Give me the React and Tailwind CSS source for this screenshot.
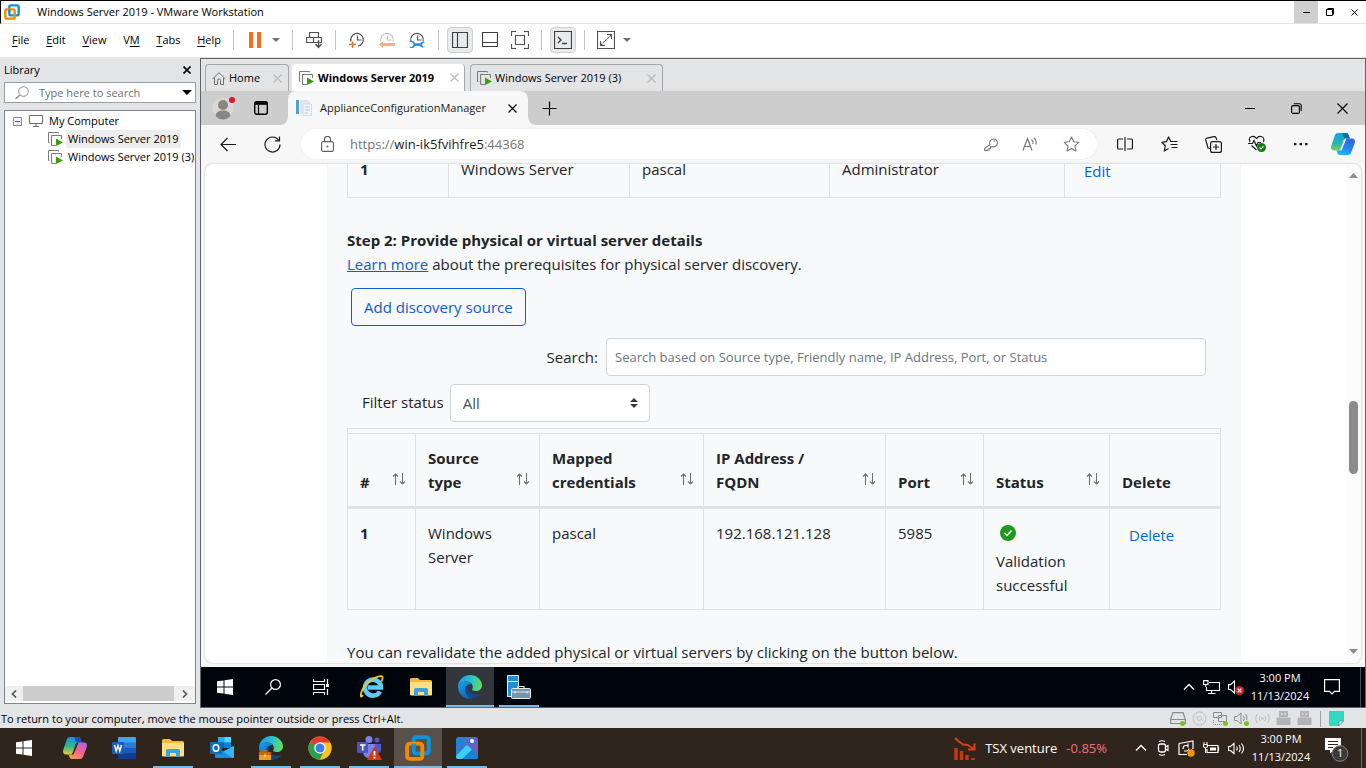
import React from "react";

function Icon({ w = 16, h = w, className = "", children, ...rest }) {
  return (
    <svg width={w} height={h} viewBox={`0 0 ${w} ${h}`} fill="none" aria-hidden="true" className={`shrink-0 ${className}`} {...rest}>
      {children}
    </svg>
  );
}

/* ---------- shared icons ---------- */

const VmwareLogo = ({ size = 16 }) => (
  <svg width={size} height={size} viewBox="0 0 24 24" fill="none" aria-hidden="true" className="shrink-0">
    <rect x="8" y="2" width="14" height="15" rx="2.5" stroke="#0f95d4" strokeWidth="3.6" />
    <rect x="2" y="8" width="14" height="14" rx="2.5" stroke="#f38b00" strokeWidth="3.6" />
    <path d="M8 12V8" stroke="#0f95d4" strokeWidth="3.6" />
  </svg>
);

const VmIcon = () => (
  <Icon w={15} h={14}>
    <path d="M1.5 10.5h-1V.5h10v1" stroke="#7a7a7a" />
    <path d="M8 13.5H3.500V3.500H13.500V7" stroke="#7a7a7a" />
    <path d="M8 6.500L15 10.500L8 14Z" fill="#3f9c0c" />
  </Icon>
);

const WinLogo = () => (
  <Icon w={16}>
    <path d="M0 2.300L6.500 1.400V7.500H0ZM7.500 1.200L16 0V7.500H7.500ZM0 8.500H6.500V14.600L0 13.700ZM7.500 8.500H16V16L7.500 14.800Z" fill="#fff" />
  </Icon>
);

const CloseX = ({ size = 9, color = "#000", width = 1.4 }) => (
  <Icon w={size}>
    <path d={`M.5 .5L${size - 0.5} ${size - 0.5}M${size - 0.5} .5L.5 ${size - 0.5}`} stroke={color} strokeWidth={width} />
  </Icon>
);

const Caret = ({ color = "#707070", w = 8 }) => (
  <Icon w={w} h={w / 2}>
    <path d={`M0 0H${w}L${w / 2} ${w / 2}Z`} fill={color} />
  </Icon>
);

const EdgeLogo = ({ badge }) => (
  <Icon w={24}>
    <defs>
      <linearGradient id="edgeTop" x1="2" y1="6" x2="24" y2="10" gradientUnits="userSpaceOnUse">
        <stop stopColor="#1e9fe0" /><stop offset=".5" stopColor="#2cc3c9" /><stop offset="1" stopColor="#6be04a" />
      </linearGradient>
      <linearGradient id="edgeLow" x1="0" y1="8" x2="12" y2="24" gradientUnits="userSpaceOnUse">
        <stop stopColor="#1d9be8" /><stop offset="1" stopColor="#0b5cb5" />
      </linearGradient>
    </defs>
    <path d="M0 12C0 5 5.500 0 12 0S24 5 24 10.500C24 14 21 16 18 16C15 16 13.800 15.200 14.200 14.500C15.500 12.500 15 7 9.500 6.500C4 6 .6 9 0 12Z" fill="url(#edgeTop)" />
    <path d="M0 12C.6 8.500 4.500 6.300 8.500 6.500C11 6.600 13 7.600 14 9C10 8.500 7 12 7.500 16C8 20.500 12 23.500 15.500 23.400C7 25.500 0 19.500 0 12Z" fill="url(#edgeLow)" />
    <path d="M10 9.500C6 11.500 6.500 19.500 12.500 22.500C17 24.500 21 21.500 22.700 18.700C19 20.500 14 20 11.500 17C9.500 14.500 9.500 12 10 9.500Z" fill="#114a8b" />
    {badge && (
      <>
        <rect x="0" y="16" width="12" height="8" fill="#f59a1b" />
        <rect x="0" y="16" width="12" height="3" fill="#c56a08" />
        <path d="M4 16V14.500H8V16" stroke="#c56a08" />
        <rect x="5" y="18.500" width="2" height="2" fill="#fff2b0" />
      </>
    )}
  </Icon>
);

const CopilotLogo = ({ warm }) => (
  <Icon w={24} h={22}>
    <defs>
      <linearGradient id="copA" x1="4" y1="0" x2="4" y2="18" gradientUnits="userSpaceOnUse">
        <stop stopColor="#14a5e4" /><stop offset=".6" stopColor="#25b6ad" /><stop offset="1" stopColor="#8ed24b" />
      </linearGradient>
      <linearGradient id="copB" x1="20" y1="4" x2="14" y2="22" gradientUnits="userSpaceOnUse">
        <stop stopColor="#3b5bdb" /><stop offset=".6" stopColor="#2482ee" /><stop offset="1" stopColor="#18b7fb" />
      </linearGradient>
      <linearGradient id="copC" x1="20" y1="5" x2="10" y2="22" gradientUnits="userSpaceOnUse">
        <stop stopColor="#b164e8" /><stop offset=".5" stopColor="#f2618e" /><stop offset="1" stopColor="#fb9c55" />
      </linearGradient>
      <linearGradient id="copD" x1="4" y1="0" x2="3" y2="18" gradientUnits="userSpaceOnUse">
        <stop stopColor="#1b8fe8" /><stop offset=".5" stopColor="#2fb58a" /><stop offset="1" stopColor="#f0cf2a" />
      </linearGradient>
    </defs>
    <path d="M7 0H15C17 0 17.500 1.500 18 3L18.800 5.500H15C13.500 5.500 12.800 6.500 12.400 7.800L9.800 15.500C9.200 17 8.300 17.500 7 17.500H3C0 17.500-.4 15 .4 12.500L3.600 3C4.300 1 5.300 0 7 0Z" fill={warm ? "url(#copD)" : "url(#copA)"} />
    <path d="M11 0H15C17 0 17.500 1.500 18 3L18.800 5.500H14C12 4.500 12.500 2 11 0Z" fill={warm ? "#1c4fc4" : "#0b6fa0"} />
    <path d="M17 22H9C7 22 6.500 20.500 6 19L5.400 17.500H7.500C9 17.500 9.700 16.500 10.100 15L13.200 7.500C13.700 6 14.500 5.500 16 5.500H21C24 5.500 24.400 8 23.600 10.500L20.400 19C19.700 21 18.700 22 17 22Z" fill={warm ? "url(#copC)" : "url(#copB)"} />
    <path d="M13.200 7.500C13.700 6 14.500 5.500 15.500 5.500L10.500 17.500H8C9 17.300 9.700 16.500 10.100 15Z" fill={warm ? "#30251d" : "#fff"} />
  </Icon>
);

const FolderIcon = () => (
  <Icon w={22} h={18}>
    <path d="M0 1.500Q0 0 1.500 0H8L10 2H20.500Q22 2 22 3.500V17H0Z" fill="#f5b83d" />
    <path d="M0 4H22V16.500Q22 17.500 21 17.500H1Q0 17.500 0 16.500Z" fill="#ffdf83" />
    <path d="M4 18V11.500Q4 10 5.500 10H16.500Q18 10 18 11.500V18H14V14H8V18Z" fill="#3ba3e0" />
  </Icon>
);

const ChevronUp = () => (
  <Icon w={12} h={8}>
    <path d="M1 6.500L6 1.500L11 6.500" stroke="#fff" strokeWidth="1.3" />
  </Icon>
);

/* ---------- window title and menu bar ---------- */

function TitleBar() {
  return (
    <header className="flex h-[23px] shrink-0 items-center border-b border-l border-b-[#e2e2e2] border-l-black bg-white pl-[3px]">
      <VmwareLogo />
      <h1 className="ml-[17px] flex-1 text-[11px] leading-4 text-black">Windows Server 2019 - VMware Workstation</h1>
      <button aria-label="Minimize" className="flex h-full w-6 items-center justify-center bg-[#cfcfcf]">
        <span className="h-px w-[7px] bg-black" />
      </button>
      <button aria-label="Restore" className="flex h-full w-6 items-center justify-center">
        <Icon w={8}>
          <path d="M.5 1.500H6.500V7.500H.5ZM1.500 .5H7.500V6.500" stroke="#000" />
        </Icon>
      </button>
      <button aria-label="Close" className="flex h-full w-6 items-center justify-center">
        <CloseX size={7} width={1} />
      </button>
    </header>
  );
}

const menus = [["", "F", "ile"], ["", "E", "dit"], ["", "V", "iew"], ["V", "M", ""], ["", "T", "abs"], ["", "H", "elp"]];

const Sep = () => <span className="h-5 w-px shrink-0 bg-[#c4c4c4]" />;

const Clock = ({ color = "#505050", children }) => (
  <Icon w={16}>
    <path d="M2 9.500A6.300 6.300 0 1 1 9 14" stroke={color} strokeWidth="1.200" />
    <path d="M8.500 3.500V8H12.500" stroke={color} strokeWidth="1.200" />
    {children}
  </Icon>
);

/* The lower part of the dial stays open so the tool drawn there is readable. */
const HalfClock = ({ color = "#505050", children }) => (
  <Icon w={16}>
    <path d="M2 9.500A6.300 6.300 0 1 1 14 9.500" stroke={color} strokeWidth="1.200" />
    <path d="M8.500 3.500V8H12.500" stroke={color} strokeWidth="1.200" />
    {children}
  </Icon>
);

function MenuBar() {
  const tool = "flex h-[26px] w-[26px] shrink-0 items-center justify-center";
  const pressed = "flex h-[26px] w-[26px] shrink-0 items-center justify-center rounded-[4px] border border-[#cfcfcf] bg-[#e9eaec]";
  return (
    <div className="flex h-[33px] shrink-0 items-center bg-white pb-[2px] pl-3">
      <nav className="flex w-[221px] shrink-0 justify-between pr-3 text-[11px] leading-4 text-black">
        {menus.map(([a, b, c]) => (
          <button key={a + b + c}>
            {a}<span className="underline underline-offset-2">{b}</span>{c}
          </button>
        ))}
      </nav>
      <Sep />
      <div className="flex w-[58px] shrink-0 items-center justify-center gap-[11px] pl-[3px]">
        <button aria-label="Suspend">
          <Icon w={12} h={16}><path d="M0 0H4V16H0ZM8 0H12V16H8Z" fill="#ff6a1a" /></Icon>
        </button>
        <button aria-label="Power options"><Caret /></button>
      </div>
      <Sep />
      <button aria-label="Send Ctrl+Alt+Del" className="flex w-[42px] shrink-0 justify-center">
        <Icon w={17} h={18}>
          <path d="M3.500 1.500H12.500V6.500H3.500ZM.5 6.500H7.500V11.500H.5ZM7.500 6.500H15.500V11.500H7.500Z" stroke="#505050" strokeWidth="1.200" />
          <path d="M12.500 9V16M9.500 13L12.500 16.500L15.500 13" stroke="#505050" strokeWidth="1.400" />
        </Icon>
      </button>
      <Sep />
      <div className="flex w-[102px] shrink-0 items-center justify-center gap-[14px]">
        <button aria-label="Take snapshot">
          <Clock><path d="M3.500 9.500V16M0 12.500H7" stroke="#f06a2a" strokeWidth="1.500" /></Clock>
        </button>
        <button aria-label="Revert snapshot">
          <HalfClock color="#c4c4c4"><path d="M0 12.500L4 9V11H16V14H4V16Z" fill="#ffab86" /></HalfClock>
        </button>
        <button aria-label="Manage snapshots">
          <HalfClock><path d="M0 10H3L4.500 12.500L3 15H0A3.500 3.500 0 0 0 6 14H11A3 3 0 0 0 16 14.500H14L13 12.500L14 11H16A3 3 0 0 0 11 11.300H6A3.500 3.500 0 0 0 0 10Z" fill="#2b95dc" /></HalfClock>
        </button>
      </div>
      <Sep />
      <div className="flex w-[102px] shrink-0 items-center justify-center gap-1">
        <button aria-label="Show library" className={pressed}>
          <Icon w={16}><path d="M.5 .5H15.500V15.500H.5ZM5.500 .5V15.500" stroke="#404040" strokeWidth="1.200" /></Icon>
        </button>
        <button aria-label="Show thumbnail bar" className={tool}>
          <Icon w={16}><path d="M.5 .5H15.500V14.500H.5ZM.5 10.500H15.500" stroke="#404040" strokeWidth="1.200" /></Icon>
        </button>
        <button aria-label="Stretch guest" className={tool}>
          <Icon w={18}><path d="M.5 5V.5H5M13 .5H17.500V5M17.500 13V17.500H13M5 17.500H.5V13M4.500 4.500H13.500V13.500H4.500Z" stroke="#505050" strokeWidth="1.200" /></Icon>
        </button>
      </div>
      <Sep />
      <div className="flex w-[42px] shrink-0 justify-center">
        <button aria-label="Console view" className={pressed}>
          <Icon w={18}><path d="M.5 .5H17.500V17.500H.5Z" stroke="#404040" strokeWidth="1.200" /><path d="M4 6L7 9L4 12M8 12.500H13" stroke="#404040" strokeWidth="1.400" /></Icon>
        </button>
      </div>
      <Sep />
      <div className="ml-3 flex shrink-0 items-center gap-2">
        <button aria-label="Full screen">
          <Icon w={18}><path d="M.5 .5H17.500V17.500H.5Z" stroke="#505050" strokeWidth="1.200" /><path d="M3.500 10V14.500H8M10 3.500H14.500V8" stroke="#505050" strokeWidth="1.100" /><path d="M4 14L14 4" stroke="#505050" strokeWidth="1.100" strokeDasharray="2 1" /></Icon>
        </button>
        <button aria-label="Full screen options"><Caret /></button>
      </div>
    </div>
  );
}

/* ---------- library sidebar ---------- */

function Library() {
  return (
    <aside className="flex w-[200px] shrink-0 flex-col pb-[4px] pl-1 pr-1 pt-[4px]">
      <div className="flex h-[18px] items-center justify-between pr-[5px]">
        <h2 className="text-[11px] leading-4 text-black">Library</h2>
        <button aria-label="Close library"><CloseX size={8} width={1.6} /></button>
      </div>
      <div className="mt-[3px] flex h-[21px] items-center border border-[#9a9ea3] bg-white pl-[10px] pr-[3px]">
        <Icon w={14}><circle cx="8.500" cy="5.500" r="4.800" stroke="#8a8a8a" /><path d="M5 9L.5 13" stroke="#8a8a8a" strokeWidth="1.300" /></Icon>
        <input aria-label="Search library" placeholder="Type here to search" className="ml-[10px] w-full min-w-0 flex-1 bg-transparent text-[11px] leading-4 outline-none placeholder:text-[#707070]" />
        <button aria-label="Search options"><Caret color="#000" w={10} /></button>
      </div>
      <div className="mt-[7px] flex min-h-0 flex-1 flex-col border border-[#82878f] bg-white">
        <ul className="min-h-0 flex-1 overflow-hidden whitespace-nowrap pt-px text-[11px] leading-[18px] text-black">
          <li className="flex h-[18px] items-center pl-2">
            <Icon w={9}><path d="M.5 .5H8.500V8.500H.5Z" fill="#f4f4f4" stroke="#8c8c8c" /><path d="M2 4.500H7" stroke="#3c5a9a" /></Icon>
            <Icon w={15} h={12} className="ml-[7px]"><path d="M.5 .5H13.500V8.500H.5ZM7 8.500V11M4 11.500H10" stroke="#6e6e6e" /></Icon>
            <span className="ml-[5px]">My Computer</span>
          </li>
          <li className="flex h-[18px] items-center gap-[3px] pl-[43px]"><VmIcon /><span className="bg-[#ededed] px-[2px]">Windows Server 2019</span></li>
          <li className="flex h-[18px] items-center gap-[3px] pl-[43px]"><VmIcon /><span className="px-[2px]">Windows Server 2019 (3)</span></li>
        </ul>
        <div className="mb-[2px] flex h-[15px] items-stretch bg-[#f0f0f0]">
          <button aria-label="Scroll left" className="flex w-[18px] items-center justify-center"><Icon w={6} h={8}><path d="M5 .5L1.500 4L5 7.500" stroke="#505050" strokeWidth="1.600" /></Icon></button>
          <div className="flex-1 bg-[#cdcdcd]" />
          <button aria-label="Scroll right" className="flex w-[21px] items-center justify-center"><Icon w={6} h={8}><path d="M1 .5L4.500 4L1 7.500" stroke="#505050" strokeWidth="1.600" /></Icon></button>
        </div>
      </div>
    </aside>
  );
}

/* ---------- guest tabs ---------- */

function GuestTabs() {
  const idle = "flex shrink-0 items-center rounded-t-[4px] border border-b-0 border-[#a3a7ab] bg-[#e3e4e6]";
  return (
    <div className="flex h-[32px] shrink-0 bg-[#e3e4e6] pl-1 pt-[5px] text-[11px] leading-4 text-black">
      <div className={`${idle} w-[84px] px-[6px]`}>
        <Icon w={14} h={13}><path d="M.5 7L7 .7L13.500 7M2.500 5.500V12.500H5.500V8.500Q5.500 7 7 7T8.500 8.500V12.500H11.500V5.500" stroke="#707070" /></Icon>
        <button className="ml-[3px] flex-1 text-left">Home</button>
        <button aria-label="Close Home"><CloseX color="#bdbdbd" /></button>
      </div>
      <div className="ml-[3px] flex w-[173px] shrink-0 items-center rounded-t-[4px] border-r border-[#a3a7ab] bg-white pl-[7px] pr-[5px]">
        <VmIcon />
        <button className="ml-1 flex-1 whitespace-nowrap text-left font-bold">Windows Server 2019</button>
        <button aria-label="Close Windows Server 2019"><CloseX color="#bdbdbd" /></button>
      </div>
      <div className={`${idle} ml-[5px] w-[193px] px-[6px]`}>
        <VmIcon />
        <button className="ml-[3px] flex-1 whitespace-nowrap text-left">Windows Server 2019 (3)</button>
        <button aria-label="Close Windows Server 2019 (3)"><CloseX color="#bdbdbd" /></button>
      </div>
    </div>
  );
}

/* ---------- browser chrome ---------- */

function BrowserTabs() {
  return (
    <div className="flex h-[34px] shrink-0 bg-[#f7f7f7]">
      <div className="flex w-[87px] shrink-0 items-center gap-[18px] rounded-br-lg bg-[#cdcdcd] pl-[11px]">
        <button aria-label="Profile">
          <Icon w={24}>
            <circle cx="11" cy="12" r="10.500" fill="#dad7d4" />
            <circle cx="11" cy="9" r="5" fill="#8a8583" />
            <path d="M3.500 20Q4 14.500 11 14.500T18.500 20Q15 23.500 11 23.500T3.500 20Z" fill="#8a8583" />
            <circle cx="20" cy="4" r="3" fill="#e81123" />
          </Icon>
        </button>
        <button aria-label="Tab actions">
          <Icon w={14}><rect x=".7" y=".7" width="12.600" height="12.600" rx="2" stroke="#000" strokeWidth="1.400" /><path d="M.7 2.500H13.300" stroke="#000" strokeWidth="2.600" /><path d="M4.500 4V13" stroke="#000" strokeWidth="1.200" /></Icon>
        </button>
      </div>
      <div className="w-[240px] shrink-0 bg-[#cdcdcd]">
        <div className="flex h-full items-center rounded-t-lg bg-[#f7f7f7] pl-2 pr-[11px]">
          <Icon w={16}>
            <path d="M0 0H3V14H0Z" fill="#4f9fd0" />
            <path d="M5 0H11L13 2V13H5Z" fill="#dfe8f2" stroke="#c2d1e2" strokeWidth=".6" />
            <path d="M7 4H15.500V15.500H7Z" fill="#f2f6fa" stroke="#c2d1e2" strokeWidth=".7" />
            <path d="M9 7H14M9 10H14M9 13H12" stroke="#b4c6db" />
          </Icon>
          <button className="ml-2 flex-1 whitespace-nowrap text-left text-[11px] leading-4 text-[#1b1b1b]">ApplianceConfigurationManager</button>
          <button aria-label="Close tab"><CloseX size={9} width={1.200} /></button>
        </div>
      </div>
      <div className="flex flex-1 items-center rounded-bl-lg bg-[#cdcdcd] pl-[14px]">
        <button aria-label="New tab"><Icon w={15}><path d="M7.500 .5V14.500M.5 7.500H14.500" stroke="#000" strokeWidth="1.200" /></Icon></button>
        <div className="ml-auto flex h-full">
          <button aria-label="Minimize browser" className="flex w-[46px] items-center justify-center"><span className="h-px w-[10px] bg-black" /></button>
          <button aria-label="Restore browser" className="flex w-[46px] items-center justify-center">
            <Icon w={11}><rect x=".6" y="2.600" width="7.800" height="7.800" rx="1.500" stroke="#000" strokeWidth="1.100" /><path d="M2.800 .8H8.200Q10.200 .8 10.200 2.800V8" stroke="#000" strokeWidth="1.100" /></Icon>
          </button>
          <button aria-label="Close browser" className="flex w-[46px] items-center justify-center"><CloseX size={11} width={1.200} /></button>
        </div>
      </div>
    </div>
  );
}

function BrowserToolbar() {
  const slot = "flex w-11 shrink-0 items-center justify-center";
  return (
    <div className="flex h-[38px] shrink-0 items-center bg-[#f7f7f7] pl-[5px] pr-[2px]">
      <button aria-label="Back" className={slot}><Icon w={16} h={15}><path d="M16 7.500H1M7.500 1L1 7.500L7.500 14" stroke="#1b1b1b" strokeWidth="1.200" /></Icon></button>
      <button aria-label="Refresh" className={slot}><Icon w={17}><path d="M14.500 4A7.500 7.500 0 1 0 16 8.500M15.500 .5V4.800H11" stroke="#1b1b1b" strokeWidth="1.200" /></Icon></button>
      <div className="ml-[7px] flex h-[30px] flex-1 items-center rounded-full bg-white pl-[20px] pr-[17px] shadow-[0_0_2px_rgba(0,0,0,0.08)]">
        <Icon w={13} h={16}><rect x=".6" y="5.600" width="11.800" height="9.800" rx="1.500" stroke="#5c5c5c" strokeWidth="1.100" /><path d="M3.500 5.500V3.500A3 3 0 0 1 9.500 3.500V5.500" stroke="#5c5c5c" strokeWidth="1.100" /><circle cx="6.500" cy="10.500" r="1" fill="#5c5c5c" /></Icon>
        <div role="textbox" aria-label="Address" contentEditable suppressContentEditableWarning className="ml-[16px] flex-1 whitespace-nowrap text-[13px] leading-5 text-[#767676] outline-none">
          https://<span className="text-[#1b1b1b]">win-ik5fvihfre5</span>:44368
        </div>
        <div className="flex items-center gap-6">
          <button aria-label="Saved password"><Icon w={14}><path d="M6 7.500A3.900 3.900 0 1 1 8 9.500L6.500 10V11.500H5V13H3.500V13.500H.6V11.500L6 7.500Z" stroke="#767676" strokeWidth="1.100" /><circle cx="10.500" cy="4" r=".8" fill="#767676" /></Icon></button>
          <button aria-label="Read aloud"><Icon w={17} h={14}><path d="M1 13.500L5.500 1.500L10 13.500M2.500 9.500H8.500" stroke="#767676" strokeWidth="1.200" /><path d="M9.500 2.500Q11.500 4 11 7M12 .8Q15 3.500 13.800 7.500" stroke="#767676" strokeWidth="1.100" /></Icon></button>
          <button aria-label="Add to favorites"><Icon w={17} h={16}><path d="M8.500 1L10.700 5.700L15.800 6.300L12 9.800L13 15L8.500 12.500L4 15L5 9.800L1.200 6.300L6.300 5.700Z" stroke="#767676" strokeWidth="1.100" strokeLinejoin="round" /></Icon></button>
        </div>
      </div>
      <div className="ml-1.5 flex items-center">
        <button aria-label="Split screen" className={slot}><Icon w={16} h={14}><path d="M6 2H1.500Q.6 2 .6 3V11Q.6 12 1.500 12H6M10 2H14.500Q15.400 2 15.400 3V11Q15.400 12 14.500 12H10M8 0V14" stroke="#1b1b1b" strokeWidth="1.200" /></Icon></button>
        <button aria-label="Favorites" className={slot}><Icon w={17} h={16}><path d="M11 5.500L9.800 5.500L7.500 1L5.500 5.700L.8 6.300L4.300 9.700L3.300 15L7.500 12.500M10.500 5.500H16.500M9.500 8.500H16.500M10.500 11.500H16.500" stroke="#1b1b1b" strokeWidth="1.200" strokeLinejoin="round" /></Icon></button>
        <button aria-label="Collections" className={slot}><Icon w={17}><path d="M5 12.500L3 12L.8 4Q.5 2.700 1.800 2.200L9 .7Q10.500 .4 11 1.700L11.700 4" stroke="#1b1b1b" strokeWidth="1.200" /><rect x="5.600" y="5.600" width="10.800" height="10.800" rx="2" stroke="#1b1b1b" strokeWidth="1.200" /><path d="M11 8V14M8 11H14" stroke="#1b1b1b" strokeWidth="1.200" /></Icon></button>
        <button aria-label="Browser essentials" className={slot}><Icon w={18}><path d="M2 7Q0 2.500 4 1.500Q6.500 1 8.500 3.500Q10.500 1 13 1.500Q17 2.500 15.500 7M3.500 10.500L8.500 15M0 8.500H4.500L6 5.500L8.500 11L10 7.500H13" stroke="#1b1b1b" strokeWidth="1.200" /><circle cx="13.500" cy="12.500" r="4.500" fill="#107c10" /><path d="M11.500 12.500L13 14L15.500 11" stroke="#fff" strokeWidth="1.100" /></Icon></button>
        <button aria-label="Settings and more" className={slot}><Icon w={14} h={4}><path d="M0 1H2.500V3.200H0ZM5.500 1H8V3.200H5.500ZM11 1H13.500V3.200H11Z" fill="#1b1b1b" /></Icon></button>
        <button aria-label="Copilot" className="flex w-10 shrink-0 items-center justify-center"><CopilotLogo /></button>
      </div>
    </div>
  );
}

/* ---------- page content ---------- */

const SortArrows = () => (
  <Icon w={14} h={12} className="mb-[9px]">
    <path d="M3.500 12V1M1 3.500L3.500 1L6 3.500M10.500 0V11M8 8.500L10.500 11L13 8.500" stroke="#6c7075" strokeWidth="1.100" />
  </Icon>
);

const columns = [
  { name: "#", width: 68, sort: true },
  { name: "Source type", width: 124, sort: true },
  { name: "Mapped credentials", width: 164, sort: true },
  { name: "IP Address / FQDN", width: 182, sort: true },
  { name: "Port", width: 98, sort: true },
  { name: "Status", width: 126, sort: true },
  { name: "Delete", width: 111, sort: false },
];

const cell = "border border-[#dee2e6] p-3 align-top font-normal";
const tallCell = "border border-[#dee2e6] px-3 pb-4 pt-3 align-top font-normal";

function CredentialsTable() {
  return (
    <table className="w-full table-fixed border-collapse text-left">
      <colgroup>
        {[101, 181, 200, 235, 156].map((w) => <col key={w} style={{ width: w }} />)}
      </colgroup>
      <tbody>
        <tr>
          <td className={tallCell}><b>1</b></td>
          <td className={tallCell}>Windows Server</td>
          <td className={tallCell}>pascal</td>
          <td className={tallCell}>Administrator</td>
          <td className={tallCell}><button className="ml-[7px] mt-[2px] block h-[22px] text-[#0366d6]">Edit</button></td>
        </tr>
      </tbody>
    </table>
  );
}

function ServersTable() {
  return (
    <div className="mt-[6px] border-t border-[#dee2e6]">
      <div className="h-[4px] border-x border-[#dee2e6]" />
      <table className="w-full table-fixed border-collapse text-left">
        <colgroup>
          {columns.map((c) => <col key={c.name} style={{ width: c.width }} />)}
        </colgroup>
        <thead>
          <tr>
            {columns.map((c) => (
              <th key={c.name} className="border border-b-[3px] border-[#dee2e6] py-3 pl-3 pr-[9px] align-bottom font-bold">
                <div className="flex items-end justify-between gap-[14px]">
                  <span>{c.name}</span>
                  {c.sort && <SortArrows />}
                </div>
              </th>
            ))}
          </tr>
        </thead>
        <tbody>
          <tr>
            <td className={cell}><b>1</b></td>
            <td className={cell}>Windows Server</td>
            <td className={cell}>pascal</td>
            <td className={cell}>192.168.121.128</td>
            <td className={cell}>5985</td>
            <td className={cell}>
              <Icon w={16} className="mb-2 ml-1 mt-[4px] block"><circle cx="8" cy="8" r="8" fill="#1f9a1f" /><path d="M4.500 8L7 10.500L11.500 5.500" stroke="#fff" strokeWidth="1.500" /></Icon>
              Validation successful
            </td>
            <td className={cell}><button className="ml-[7px] mt-[2px] block text-[#0366d6]">Delete</button></td>
          </tr>
        </tbody>
      </table>
    </div>
  );
}

function PageContent() {
  return (
    <div className="flex min-h-0 flex-1 bg-[#f7f7f7] px-1 pb-1 pt-px">
      <div className="flex min-w-0 flex-1 overflow-hidden rounded-lg bg-white shadow-[0_0_2px_rgba(0,0,0,0.3)]">
        <main className="ml-[122px] mr-[105px] min-w-0 flex-1 overflow-hidden bg-[#f8f9fb] px-5 text-[15px] leading-6 text-[#212529]">
          <div className="-mt-5">
            <CredentialsTable />
            <h3 className="mt-[30px] font-bold">Step 2: Provide physical or virtual server details</h3>
            <p><a href="#prerequisites" className="text-[#0b5cd5] underline">Learn more</a> about the prerequisites for physical server discovery.</p>
            <button className="ml-1 mt-3 block h-[38px] rounded-[4px] border border-[#0b5cd5] px-3 text-[#0b5cd5]">Add discovery source</button>
            <div className="mt-3 flex items-center justify-end pr-[15px]">
              <label htmlFor="server-search">Search:</label>
              <input id="server-search" placeholder="Search based on Source type, Friendly name, IP Address, Port, or Status" className="ml-2 h-[38px] w-[600px] rounded-[4px] border border-[#ced4da] bg-white px-2 text-[13px] leading-5 outline-none placeholder:text-[#6c757d]" />
            </div>
            <div className="mt-2 flex items-center pl-[15px]">
              <label htmlFor="status-filter" className="pb-[3px]">Filter status</label>
              <div className="relative ml-1.5 w-[200px]">
                <select id="status-filter" className="h-[38px] w-full appearance-none rounded-[4px] border border-[#ced4da] bg-white px-3 text-[#495057] outline-none">
                  <option>All</option>
                </select>
                <Icon w={8} h={10} className="pointer-events-none absolute right-3 top-[14px]"><path d="M0 4L4 0L8 4ZM0 6H8L4 10Z" fill="#343a40" /></Icon>
              </div>
            </div>
            <ServersTable />
            <p className="mt-[30px]">You can revalidate the added physical or virtual servers by clicking on the button below.</p>
          </div>
        </main>
        <div className="flex w-[15px] shrink-0 flex-col items-center bg-[#fbfbfb] py-[9px]">
          <button aria-label="Scroll up"><Icon w={9} h={5}><path d="M0 5L4.500 0L9 5Z" fill="#8b8b8b" /></Icon></button>
          <div className="flex-[222]" />
          <div className="h-[73px] w-[9px] rounded-full bg-[#8b8b8b]" />
          <div className="flex-[175]" />
          <button aria-label="Scroll down"><Icon w={9} h={5}><path d="M0 0L4.500 5L9 0Z" fill="#8b8b8b" /></Icon></button>
        </div>
      </div>
    </div>
  );
}

/* ---------- taskbars ---------- */

function Task({ label, active, open, children }) {
  return (
    <button aria-label={label} className={`relative flex h-10 w-12 shrink-0 items-center justify-center ${active ? "bg-white/20" : ""}`}>
      {children}
      {(active || open) && <span className={`absolute bottom-0 h-[2px] bg-[#76b9ed] ${active ? "inset-x-0" : "inset-x-1"}`} />}
    </button>
  );
}

function ClockText() {
  return (
    <div className="w-16 shrink-0 text-center text-[11px] leading-[18px] text-white">
      <div>3:00 PM</div>
      <div>11/13/2024</div>
    </div>
  );
}

function GuestTaskbar() {
  return (
    <footer className="flex h-10 shrink-0 items-center bg-[#00050b]">
      <Task label="Start"><WinLogo /></Task>
      <Task label="Search"><Icon w={16}><circle cx="10.500" cy="5.500" r="4.900" stroke="#fff" strokeWidth="1.200" /><path d="M7 9L.5 15.500" stroke="#fff" strokeWidth="1.300" /></Icon></Task>
      <Task label="Task view"><Icon w={17} h={16}><path d="M.5 0V2.500H11.500V0M.5 16V13.500H11.500V16M.5 5.500H11.500V10.500H.5ZM14.500 0V5M14.500 10V16" stroke="#fff" strokeWidth="1.200" /><rect x="13" y="5" width="3" height="3" fill="#fff" /></Icon></Task>
      <div className="ml-[3px] flex gap-px">
        <Task label="Internet Explorer">
          <Icon w={24}>
            <path d="M20 16.500A8 8 0 1 1 21 12.500H8" stroke="#5ccbf5" strokeWidth="4.600" />
            <path d="M3 20Q0 24 1 18.500Q3 10 12 4.500Q21-.5 22.500 2Q23 3.500 21.500 6.500" stroke="#f2c32e" strokeWidth="1.800" />
          </Icon>
        </Task>
        <Task label="File Explorer"><FolderIcon /></Task>
        <Task label="Microsoft Edge" active><EdgeLogo /></Task>
        <Task label="Server Manager" open>
          <Icon w={24}>
            <path d="M.5 .5H11.500V21.500H.5Z" fill="#1e8fdc" stroke="#d8ecfa" />
            <path d="M1 6.500H11" stroke="#d8ecfa" />
            <path d="M11 13V11.500H17V13" stroke="#e4e9ed" strokeWidth="1.200" />
            <rect x="4.500" y="13.500" width="19" height="10" rx="1" fill="#7695a8" stroke="#e4e9ed" />
            <path d="M5 17H23M8 16V18.500M20 16V18.500" stroke="#e4e9ed" />
          </Icon>
        </Task>
      </div>
      <div className="ml-auto flex items-center">
        <div className="flex items-center gap-[8px]">
          <button aria-label="Hidden icons"><ChevronUp /></button>
          <Icon w={17} h={14}><path d="M6 2.500H16.500V10.500H3.500V7M8.500 11V13.500M5 13.500H12.500" stroke="#fff" strokeWidth="1.100" /><path d="M.6 .6H5V4.500H.6ZM2.800 4.500V7" stroke="#fff" strokeWidth="1.100" /></Icon>
          <Icon w={16} h={15}><path d="M.6 4.600H2.500L6.500 1V13L2.500 9.500H.6Z" stroke="#fff" strokeWidth="1.100" /><circle cx="11.500" cy="10.500" r="4.500" fill="#d9202a" /><path d="M9.700 8.700L13.300 12.300M13.300 8.700L9.700 12.300" stroke="#fff" strokeWidth="1.200" /></Icon>
        </div>
        <div className="ml-1"><ClockText /></div>
        <button aria-label="Notifications" className="ml-3"><Icon w={16}><path d="M.6 .6H15.400V12.400H10.500L8 15L5.500 12.400H.6Z" stroke="#fff" strokeWidth="1.200" /></Icon></button>
        <span className="ml-5 mr-1 h-10 w-px bg-[#4a4d52]" />
      </div>
    </footer>
  );
}

function StatusBar() {
  const g = "#8b8b8b";
  const dot = <circle cx="12.500" cy="12.500" r="2.500" fill="#7cc21e" />;
  const usb = (
    <Icon w={15}><path d="M3 0H12V6H3ZM.5 6.500H14.500V14H.5Z" fill="#b3b3b3" /><path d="M5 3H6.500M8.500 3H10" stroke="#e3e4e6" strokeWidth="1.500" /></Icon>
  );
  return (
    <div className="flex h-[20px] shrink-0 items-center justify-between pl-px pr-[22px] pt-px">
      <p className="text-[11px] leading-4 text-black">To return to your computer, move the mouse pointer outside or press Ctrl+Alt.</p>
      <div className="flex items-center gap-[6px]">
        <Icon w={16} h={15}><path d="M.6 8.500L3 1.600H13L15.400 8.500V12.500H.6ZM.6 8.500H15.400" stroke={g} strokeWidth="1.200" />{dot}</Icon>
        <Icon w={15}><circle cx="7.500" cy="7.500" r="6.500" stroke="#c0c0c0" /><circle cx="7.500" cy="7.500" r="2" stroke="#c0c0c0" /><path d="M3.500 5L5.500 6.500M9.500 8.500L11.500 10" stroke="#c0c0c0" /></Icon>
        <Icon w={15}><path d="M.5 1.500H8.500V6.500H.5ZM5.500 4.500H13.500V10.500H5.500Z" stroke={g} /><path d="M.5 9V13.500H9" stroke={g} strokeDasharray="1 1" />{dot}</Icon>
        <Icon w={15}><path d="M.5 5.500H3L7 2V13L3 9.500H.5ZM9.500 5Q11 7.500 9.500 10M11.500 3Q14 6 12.500 9" stroke={g} />{dot}</Icon>
        <Icon w={15}><circle cx="7.500" cy="7.500" r="1.200" fill="#bdbdbd" /><path d="M5 5Q3.500 7.500 5 10M10 5Q11.500 7.500 10 10M2.500 3Q-1 7.500 2.500 12M12.500 3Q16 7.500 12.500 12" stroke="#bdbdbd" /></Icon>
        {usb}
        {usb}
        <span className="ml-[2px] h-4 w-px bg-[#a0a0a0]" />
        <Icon w={15} className="ml-[2px]"><path d="M.5 .5H14.500V10L10 14.500H.5Z" fill="#2fd9c3" stroke="#8b8b8b" strokeWidth=".6" /><path d="M10 14.500V10H14.500Z" fill="#d7f4ef" stroke="#777" strokeWidth=".6" /></Icon>
      </div>
    </div>
  );
}

function HostTaskbar() {
  return (
    <footer className="flex h-10 shrink-0 items-center bg-[#30251d]">
      <Task label="Start"><WinLogo /></Task>
      <div className="ml-[3px] flex gap-px">
        <Task label="Copilot"><CopilotLogo warm /></Task>
        <Task label="Word">
          <Icon w={24} h={22}>
            <path d="M6 0H23Q24 0 24 1V6H6Z" fill="#41a5ee" /><path d="M6 5.500H24V11H6Z" fill="#2b7cd3" /><path d="M6 11H24V16.500H6Z" fill="#185abd" /><path d="M6 16.500H24V21Q24 22 23 22H7Q6 22 6 21Z" fill="#103f91" />
            <rect y="5" width="12" height="12" rx="1" fill="#1a5dbe" />
            <path d="M2.500 8L4.200 14L6 8.500L7.800 14L9.500 8" stroke="#fff" strokeWidth="1.400" />
          </Icon>
        </Task>
        <Task label="File Explorer" open><FolderIcon /></Task>
        <Task label="Outlook">
          <Icon w={24} h={22}>
            <path d="M8 0H21V11H8Z" fill="#28a8ea" /><path d="M14.500 0H21V5.500H14.500Z" fill="#50d9ff" /><path d="M8 5.500H14.500V11H8Z" fill="#0364b8" /><path d="M14.500 5.500H21V11H14.500Z" fill="#0a80d7" />
            <path d="M5 9L14 15L24 8.500V20Q24 21 23 21H6Q5 21 5 20Z" fill="#1490df" /><path d="M24 9V20Q24 21 23 21L13 14.500Z" fill="#35b8f1" />
            <rect y="5" width="12" height="12" rx="1" fill="#0f6cbd" />
            <ellipse cx="6" cy="11" rx="2.800" ry="3.200" stroke="#fff" strokeWidth="1.500" />
          </Icon>
        </Task>
        <Task label="Microsoft Edge" open><EdgeLogo badge /></Task>
        <Task label="Chrome" open>
          <Icon w={24}>
            <circle cx="12" cy="12" r="11.500" fill="#fbc116" />
            <path d="M12 12L2 6.250A11.500 11.500 0 0 1 22 6.250V7H12Z" fill="#e33b2e" />
            <path d="M12 12L2 6.250A11.500 11.500 0 0 0 12 23.500L16.300 14.500Z" fill="#28a148" />
            <path d="M12 6.500H22.200A11.500 11.500 0 0 1 12 23.500L16.800 14.700Z" fill="#fbc116" />
            <circle cx="12" cy="12" r="5.800" fill="#fff" /><circle cx="12" cy="12" r="4.500" fill="#3f7fe8" />
          </Icon>
        </Task>
        <Task label="Teams" open>
          <Icon w={25} h={24}>
            <circle cx="12" cy="3.500" r="3.500" fill="#7b83eb" /><circle cx="20" cy="4" r="2.500" fill="#5059c9" />
            <path d="M6 8H18V16Q17 22 12 22T6 16Z" fill="#7b83eb" /><path d="M18 8H24V14Q23 18 18 17Z" fill="#5059c9" />
            <rect y="6" width="11" height="11" rx="1" fill="#4b53bc" /><path d="M3 9H8.500M5.700 9V14.500" stroke="#fff" strokeWidth="1.500" />
            <path d="M17.500 10.500L25 24H10Z" fill="#d93707" /><path d="M17.500 15V19.500M17.500 20.800V22.500" stroke="#fff" strokeWidth="1.800" />
          </Icon>
        </Task>
        <Task label="VMware Workstation" active><VmwareLogo size={26} /></Task>
        <Task label="Photos" open>
          <Icon w={22}>
            <defs>
              <linearGradient id="photoBg" x1="0" y1="6" x2="22" y2="12" gradientUnits="userSpaceOnUse"><stop stopColor="#1b86dd" /><stop offset="1" stopColor="#7a58b8" /></linearGradient>
              <clipPath id="photoClip"><rect width="22" height="22" rx="2.500" /></clipPath>
            </defs>
            <g clipPath="url(#photoClip)">
              <path d="M0 0H22V22H0Z" fill="url(#photoBg)" />
              <path d="M2 22L16 12L22 18V22Z" fill="#1583d8" />
              <path d="M0 19L9.500 9Q11 7.500 12.500 9L16 12.500L6 22H0Z" fill="#3dd0f5" />
              <circle cx="16" cy="4" r="2" fill="#fff" />
            </g>
          </Icon>
        </Task>
      </div>
      <div className="ml-auto flex items-center">
        <button className="flex items-center text-[13px] leading-5 text-white">
          <Icon w={22} h={23}><path d="M2 23V11M7.500 23V14M13 23V18M19 23V21" stroke="#c8380f" strokeWidth="3.500" /><path d="M1 1Q5 5 9 7.500L13.500 8L20 12M20.500 6.500V12.500H14" stroke="#d9401a" strokeWidth="2" /></Icon>
          <span className="ml-[9px]">TSX venture</span>
          <span className="ml-[9px] text-[#f1707b]">-0.85%</span>
        </button>
        <div className="ml-7 flex items-center gap-[8px]">
          <button aria-label="Hidden icons"><ChevronUp /></button>
          <Icon w={14} h={16} className="ml-[1px]"><rect x="2.500" y="4" width="7" height="8" rx="2" stroke="#fff" strokeWidth="1.300" /><path d="M9.500 7L12 5.500V10.500L9.500 9M3 1.500Q6 0 9 1.500M3 14.500Q6 16 9 14.500" stroke="#fff" strokeWidth="1.100" /></Icon>
          <Icon w={17} h={17}><path d="M1 3.500L15 1V9M9 14.500H1V3.500M5 9Q5 5.500 8 5.500H10M10 3.500V7.500M11 8.500Q10.500 11 8 11H6" stroke="#fff" strokeWidth="1.200" /><circle cx="13" cy="13" r="3.700" fill="#ff9400" /></Icon>
          <Icon w={17} h={12}><path d="M5 3.500H15V10.500H4V7M15.500 5V9" stroke="#fff" strokeWidth="1.200" /><path d="M7 5.500H13V8.500H7Z" fill="#fff" /><path d="M1 0V2M4 0V2M.5 2.500H4.500V5Q2.500 6 .5 5ZM2.500 6V11" stroke="#fff" /></Icon>
          <Icon w={17} h={13}><path d="M.6 4.500H2.500L6 1.500V11.500L2.500 8.500H.6ZM8.500 4.500Q10 6.500 8.500 8.500M11 3Q13.500 6.500 11 10M13.500 1.500Q17.500 6.500 13.500 11.500" stroke="#fff" strokeWidth="1.100" /></Icon>
        </div>
        <div className="ml-1"><ClockText /></div>
        <button aria-label="Notifications, 1 new" className="relative ml-3 mt-1">
          <Icon w={24}><path d="M0 0H16V12H9L5 15.500V12H0Z" fill="#fff" /><path d="M3 3.500H13M3 6.500H13M3 9.500H8" stroke="#30251d" /><circle cx="15" cy="15.500" r="7.800" fill="#3a3a3c" stroke="#85807c" /></Icon>
          <span className="absolute left-[12px] top-[7px] text-[11px] leading-4 text-white">1</span>
        </button>
        <span className="ml-3 mr-1 h-10 w-px bg-[#6b645e]" />
      </div>
    </footer>
  );
}

export default function App() {
  return (
    <div className="flex h-screen flex-col overflow-hidden border-t border-black bg-[#e3e4e6] font-['Open_Sans','Noto_Sans',sans-serif]">
      <TitleBar />
      <MenuBar />
      <div className="flex min-h-0 flex-1">
        <Library />
        <section className="mt-px flex min-w-0 flex-1 flex-col border border-[#5f6266]">
          <GuestTabs />
          <BrowserTabs />
          <BrowserToolbar />
          <PageContent />
          <GuestTaskbar />
        </section>
      </div>
      <StatusBar />
      <HostTaskbar />
    </div>
  );
}
